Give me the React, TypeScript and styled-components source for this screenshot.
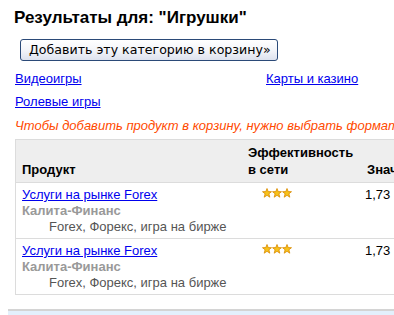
import styled, { createGlobalStyle } from "styled-components";

const GlobalStyle = createGlobalStyle`
    html, body {
        margin: 0;
        padding: 0;
        background: #fff;
        overflow: hidden;
    }
    body {
        font-family: "Liberation Sans", Arial, sans-serif;
        font-size: 13px;
        color: #000;
    }
`;

const Page = styled.div`
    width: 394px;
    height: 315px;
    overflow: hidden;
    display: flex;
    flex-direction: column;
`;

const Content = styled.div`
    padding: 8px 0 0 15px;
`;

const Title = styled.h1`
    margin: 0 0 0 -1px;
    font-size: 17px;
    font-weight: bold;
    line-height: 19px;
`;

const AddButton = styled.button`
    margin: 12px 0 0 5px;
    height: 22px;
    padding: 0 6px 1px 8px;
    font-family: "DejaVu Sans", Tahoma, sans-serif;
    font-size: 12.6px;
    color: #000;
    border: 1px solid #2b4a78;
    border-radius: 3px;
    background: linear-gradient(#ffffff, #f4f5f9 50%, #dde2ee);
    cursor: pointer;
`;

const CategoryGrid = styled.div`
    margin-top: 10px;
    display: grid;
    grid-template-columns: 251px auto;
    row-gap: 7px;
    line-height: 16px;
`;

const Link = styled.a`
    color: #0000ee;
    text-decoration: underline;
    white-space: nowrap;
`;

const Notice = styled.div`
    margin-top: 8px;
    color: #ff4a00;
    font-style: italic;
    white-space: nowrap;
    line-height: 16px;
`;

const Table = styled.table`
    margin-top: 5px;
    width: 470px;
    border-collapse: collapse;
    border: 1px solid #dcdcdc;
    table-layout: fixed;
`;

const HeadCell = styled.th<{ $w: number }>`
    width: ${(p) => p.$w}px;
    background: #eeeeee;
    border-bottom: 1px solid #dcdcdc;
    text-align: left;
    vertical-align: bottom;
    font-weight: bold;
    font-size: 13px;
    line-height: 17px;
    padding: 4px 0 4px 6px;
    white-space: nowrap;
`;

const Cell = styled.td<{ $pad?: number }>`
    vertical-align: top;
    text-align: left;
    padding: 4px 0 3px ${(p) => p.$pad ?? 6}px;
    line-height: 16px;
    border-bottom: 1px solid #dcdcdc;
`;

const Company = styled.div`
    color: #999;
    font-weight: bold;
`;

const Keywords = styled.div`
    color: #555;
    padding-left: 27px;
`;

const Stars = styled.div`
    display: flex;
    padding: 1px 0 0 14px;
`;

const Footer = styled.div`
    margin: 14px 0 0 8px;
    border-top: 2px solid #d4d4d4;
    background: #e3f0fc;
    flex: 1;
`;

const Star = () => (
    <svg width="10" height="10" viewBox="0 0 10 10">
        <path
            d="M5 0.5 L6.2 3.6 L9.5 3.7 L6.9 5.8 L7.8 9.2 L5 7.3 L2.2 9.2 L3.1 5.8 L0.5 3.7 L3.8 3.6 Z"
            fill="#f7c21b"
            stroke="#d98a00"
            strokeWidth="0.8"
            strokeLinejoin="round"
        />
    </svg>
);

const rows = [
    { name: "Услуги на рынке Forex", company: "Калита-Финанс", keys: "Forex, Форекс, игра на бирже", value: "1,73" },
    { name: "Услуги на рынке Forex", company: "Калита-Финанс", keys: "Forex, Форекс, игра на бирже", value: "1,73" },
];

const App = () => {
    return (
        <Page>
            <GlobalStyle />
            <Content>
                <Title>Результаты для: "Игрушки"</Title>
                <AddButton>Добавить эту категорию в корзину»</AddButton>
                <CategoryGrid>
                    <Link href="#">Видеоигры</Link>
                    <Link href="#">Карты и казино</Link>
                    <Link href="#">Ролевые игры</Link>
                </CategoryGrid>
                <Notice>Чтобы добавить продукт в корзину, нужно выбрать формат</Notice>
                <Table>
                    <thead>
                        <tr>
                            <HeadCell $w={220}>Продукт</HeadCell>
                            <HeadCell $w={113}>
                                Эффективность
                                <br />в сети
                            </HeadCell>
                            <HeadCell $w={119}>Значение</HeadCell>
                        </tr>
                    </thead>
                    <tbody>
                        {rows.map((r, i) => (
                            <tr key={i}>
                                <Cell>
                                    <Link href="#">{r.name}</Link>
                                    <Company>{r.company}</Company>
                                    <Keywords>{r.keys}</Keywords>
                                </Cell>
                                <Cell>
                                    <Stars>
                                        <Star />
                                        <Star />
                                        <Star />
                                    </Stars>
                                </Cell>
                                <Cell $pad={4}>{r.value}</Cell>
                            </tr>
                        ))}
                    </tbody>
                </Table>
            </Content>
            <Footer />
        </Page>
    );
};

export default App;
